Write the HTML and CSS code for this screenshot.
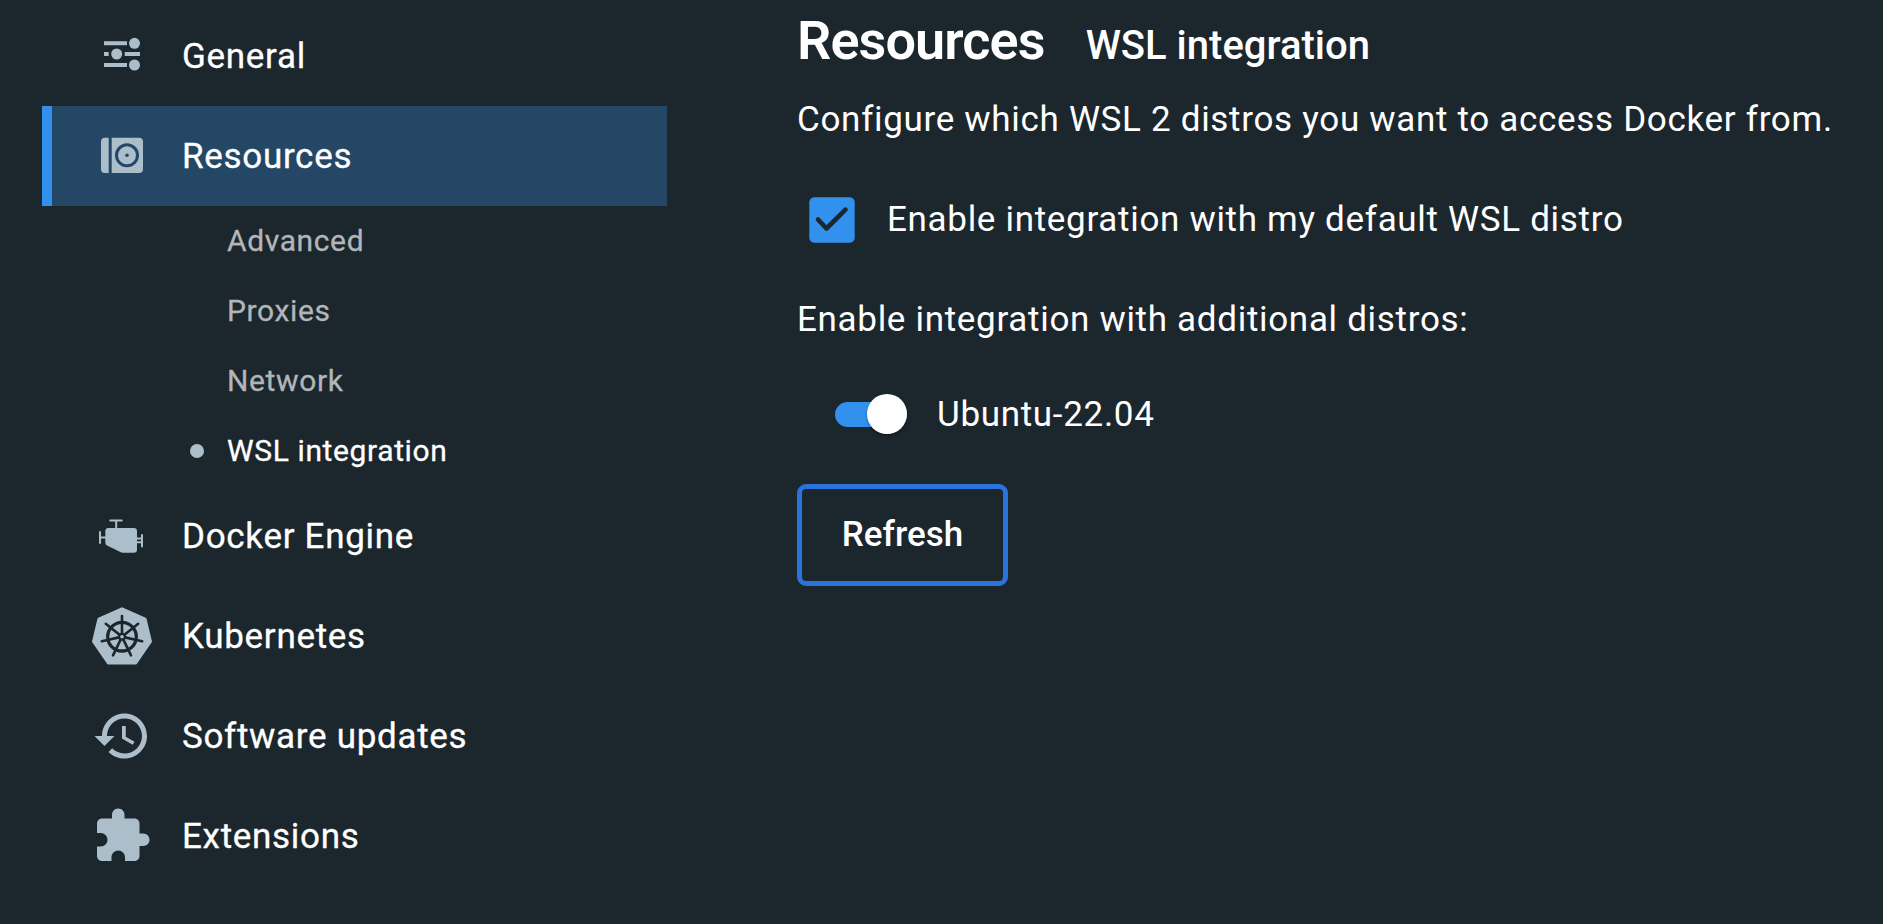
FILE: index.html
```html
<!DOCTYPE html>
<html lang="en">
<head>
<meta charset="utf-8">
<title>Resources – WSL integration</title>
<link rel="stylesheet" href="styles.css">
</head>
<body>
<div class="app">
  <nav class="sidebar">
    <a class="item">
      <svg class="icon" viewBox="0 0 60 60"><path d="M12 15.3h23v4H12zM12 26h4.7v4H12zM32.7 26H48v4H32.7zM12 37h23v4H12z"/><circle cx="42.5" cy="17.3" r="5.5"/><circle cx="24.7" cy="28" r="5.5"/><circle cx="42.5" cy="39" r="5.5"/></svg>
      <span class="label">General</span>
    </a>
    <a class="item item-active">
      <svg class="icon" viewBox="0 0 60 60"><path d="M13 11.7h3.7V47H13a4 4 0 0 1-4-4V15.7a4 4 0 0 1 4-4zM19.7 11.7H47a4 4 0 0 1 4 4V43a4 4 0 0 1-4 4H19.7z"/><circle class="disc-ring" cx="35" cy="29.3" r="10.5"/><circle class="disc-hole" cx="35" cy="29.3" r="1.8"/></svg>
      <span class="label">Resources</span>
    </a>
    <div class="subnav">
      <a class="subitem">Advanced</a>
      <a class="subitem">Proxies</a>
      <a class="subitem">Network</a>
      <a class="subitem subitem-active"><i class="dot"></i>WSL integration</a>
    </div>
    <a class="item">
      <svg class="icon" viewBox="0 0 60 60"><path d="M16.5 22h25.3a3.2 3.2 0 0 1 3.2 3.2v18.3a3.2 3.2 0 0 1-3.2 3.2H30.5a4 4 0 0 1-1.7-.4L15 39.5a3 3 0 0 1-1.7-2.7V25.2A3.2 3.2 0 0 1 16.5 22z"/><path class="pipes" d="M18.3 14.5h11.4M24.2 14.5V23M8 26v11M8 31.5h6M50 29v11.4M44 32.4h6M44 36.3h6"/></svg>
      <span class="label">Docker Engine</span>
    </a>
    <a class="item">
      <svg class="icon" viewBox="0 0 60 60"><path class="hepta" d="M30 2.7 53.2 13 58.6 35.5 43.8 57H16.2L1.4 35.5 6.8 13z"/>
        <g class="wheel"><circle cx="30" cy="30.7" r="14.3"/><path id="spoke" d="M30 27.5V10M30 26.5V17"/><use href="#spoke" transform="rotate(51.43 30 30.7)"/><use href="#spoke" transform="rotate(102.86 30 30.7)"/><use href="#spoke" transform="rotate(154.29 30 30.7)"/><use href="#spoke" transform="rotate(205.71 30 30.7)"/><use href="#spoke" transform="rotate(257.14 30 30.7)"/><use href="#spoke" transform="rotate(308.57 30 30.7)"/></g>
        <circle class="hub" cx="30" cy="30.7" r="4"/><circle cx="30" cy="30.7" r="1.8"/></svg>
      <span class="label">Kubernetes</span>
    </a>
    <a class="item">
      <svg class="icon" viewBox="0 0 24 24"><path d="M13 3c-4.97 0-9 4.03-9 9H1l3.89 3.89.07.14L9 12H6c0-3.87 3.13-7 7-7s7 3.13 7 7-3.13 7-7 7c-1.93 0-3.68-.79-4.94-2.06l-1.42 1.42C8.27 19.99 10.51 21 13 21c4.97 0 9-4.03 9-9s-4.03-9-9-9zm-1 5v5l4.28 2.54.72-1.21-3.5-2.08V8H12z"/></svg>
      <span class="label">Software updates</span>
    </a>
    <a class="item">
      <svg class="icon" viewBox="0 0 24 24"><path d="M20.5 11H19V7c0-1.1-.9-2-2-2h-4V3.5C13 2.12 11.88 1 10.5 1S8 2.12 8 3.5V5H4c-1.1 0-1.99.9-1.99 2v3.8H3.5c1.49 0 2.7 1.21 2.7 2.7s-1.21 2.7-2.7 2.7H2V20c0 1.1.9 2 2 2h3.8v-1.5c0-1.49 1.21-2.7 2.7-2.7 1.49 0 2.7 1.21 2.7 2.7V22H17c1.1 0 2-.9 2-2v-4h1.5c1.38 0 2.5-1.12 2.5-2.5S21.88 11 20.5 11z"/></svg>
      <span class="label">Extensions</span>
    </a>
  </nav>
  <main class="content">
    <header class="heading">
      <h1 class="title">Resources</h1>
      <h2 class="subtitle">WSL integration</h2>
    </header>
    <p class="text">Configure which WSL 2 distros you want to access Docker from.</p>
    <label class="check-row">
      <svg class="checkbox" viewBox="0 0 46 46"><rect class="check-box" x="0.3" y="0.3" width="45.4" height="45.4" rx="5"/><path class="check-mark" d="M9 22.5 17.5 31.5 36.5 12.7"/></svg>
      <span>Enable integration with my default WSL distro</span>
    </label>
    <p class="text">Enable integration with additional distros:</p>
    <label class="switch-row">
      <span class="switch"><span class="thumb"></span></span>
      <span class="label">Ubuntu-22.04</span>
    </label>
    <button class="button">Refresh</button>
  </main>
</div>
</body>
</html>
```

FILE: styles.css
```css
* { box-sizing: border-box; }
body {
  margin: 0;
  background: #1c262d;
  color: #fff;
  font: 400 35px/50px Roboto, sans-serif;
  letter-spacing: 0.69px;
  white-space: nowrap;
  overflow: hidden;
}
.app { display: flex; height: 924px; }
.sidebar {
  width: 625px;
  margin-left: 42px;
  padding-top: 6px;
  flex: none;
  -webkit-text-stroke: 0.3px currentColor;
}
.item {
  display: flex;
  align-items: center;
  gap: 30px;
  height: 100px;
  padding-left: 40px;
  border-left: 10px solid transparent;
}
.item-active { background: #244766; border-left-color: #3391ee; }
.label { padding-top: 2px; }
.icon { width: 60px; height: 60px; fill: #adbecb; }
.disc-ring { fill: none; stroke: #244766; stroke-width: 3; }
.disc-hole { fill: #244766; }
.pipes { fill: none; stroke: #adbecb; stroke-width: 2; stroke-linecap: round; }
.hepta { stroke: #adbecb; stroke-width: 2.8; stroke-linejoin: round; }
.wheel { fill: none; stroke: #1c262d; stroke-width: 3.3; }
.wheel path, .wheel use { stroke-width: 2.6; stroke-linecap: round; }
.hub { fill: #1c262d; }
.subitem {
  display: flex;
  align-items: center;
  height: 70px;
  padding-left: 185px;
  color: #b2b6b9;
  font-size: 30px;
  letter-spacing: 0.62px;
}
.subitem-active { padding-left: 148px; color: #fff; }
.dot {
  width: 14px;
  height: 14px;
  margin-right: 23px;
  border-radius: 50%;
  background: #adbecb;
}
.content { padding: 10px 0 0 130px; }
.heading { display: flex; align-items: baseline; gap: 41px; height: 85px; }
.title, .subtitle { margin: 0; }
.title { font-size: 54px; font-weight: 600; line-height: 62px; letter-spacing: -0.9px; }
.subtitle { font-size: 40px; font-weight: 500; letter-spacing: 0; }
.text { margin: 0; height: 50px; }
.check-row { display: flex; align-items: center; gap: 32px; height: 50px; margin: 50px 0; padding-left: 12px; }
.checkbox { width: 46px; height: 46px; }
.check-box { fill: #3391ee; }
.check-mark { fill: none; stroke: #1c262d; stroke-width: 4.6; stroke-linecap: round; stroke-linejoin: round; }
.switch-row { display: flex; align-items: center; gap: 30px; height: 50px; margin: 44px 0 45px; padding-left: 38px; }
.switch {
  display: flex;
  justify-content: flex-end;
  align-items: center;
  width: 72px;
  height: 25px;
  border-radius: 13px;
  background: #3391ee;
}
.thumb {
  width: 40px;
  height: 40px;
  border-radius: 50%;
  background: #fff;
  box-shadow: 0 2px 3px rgba(0, 0, 0, .3);
}
.button {
  display: block;
  width: 211px;
  height: 102px;
  padding: 0 0 1px;
  border: 5px solid #2a72dc;
  border-radius: 9px;
  background: none;
  color: #fff;
  font: 500 35px/50px Roboto, sans-serif;
}
```
